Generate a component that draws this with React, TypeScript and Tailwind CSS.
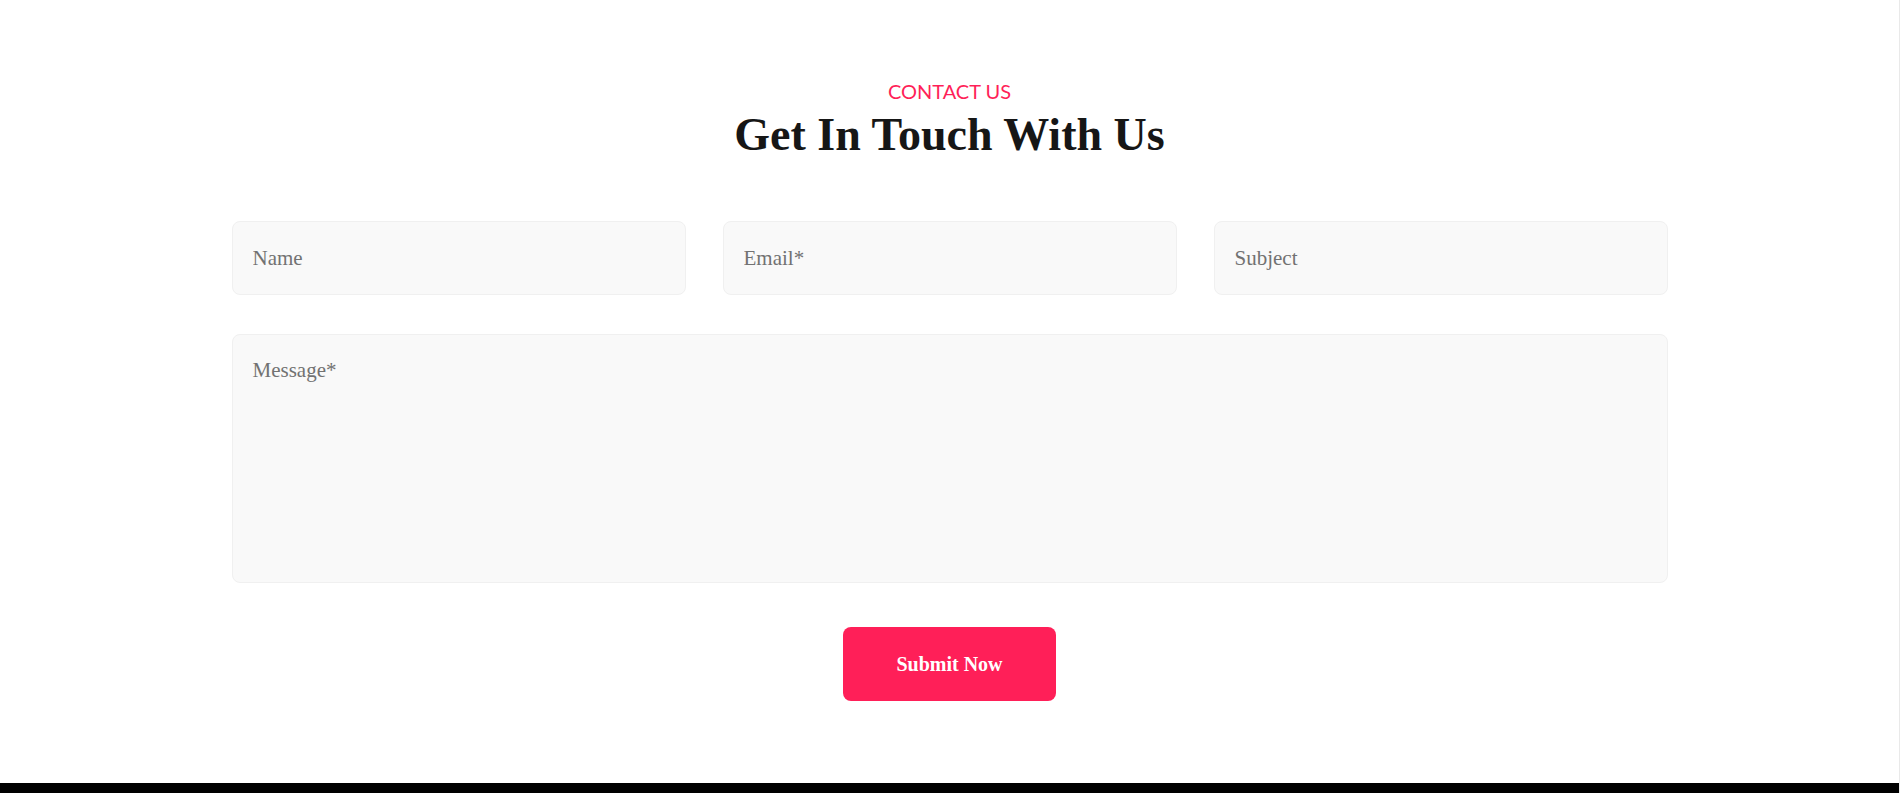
import React from "react";

export default function App() {
  const inputCls =
    "w-full h-[74px] rounded-lg border border-[#f0f0f0] bg-[#f9f9f9] pl-5 pr-5 font-['Liberation_Serif','Times_New_Roman',serif] text-[21px] text-[#333] placeholder:text-[#727272] outline-none";
  return (
    <div className="w-full min-h-[793px] bg-white border-r border-[#e9e9e9] flex flex-col">
      <section className="h-[783px] flex flex-col items-center pt-[79px]">
        <p className="font-['Lato','Liberation_Sans',sans-serif] text-[20px] leading-[24px] text-[#ff1f58] uppercase">
          Contact Us
        </p>
        <h2 className="mt-[4px] font-['Liberation_Serif','Times_New_Roman',serif] text-[46px] leading-[56px] font-bold text-[#161616]">
          Get In Touch With Us
        </h2>
        <form className="mt-[58px] w-[1436px] flex flex-col" onSubmit={(e) => e.preventDefault()}>
          <div className="grid grid-cols-3 gap-x-[37px]">
            <input className={inputCls} placeholder="Name" />
            <input className={inputCls} placeholder="Email*" />
            <input className={inputCls} placeholder="Subject" />
          </div>
          <textarea
            className="mt-[39px] w-full h-[249px] resize-none rounded-lg border border-[#f0f0f0] bg-[#f9f9f9] px-5 pt-[20px] font-['Liberation_Serif','Times_New_Roman',serif] text-[21px] leading-[30px] text-[#333] placeholder:text-[#727272] outline-none"
            placeholder="Message*"
          />
          <div className="mt-[44px] flex justify-center">
            <button
              type="submit"
              className="w-[213px] h-[74px] rounded-lg bg-[#ff1f58] font-['Liberation_Serif','Times_New_Roman',serif] text-white text-[20px] font-bold"
            >
              Submit Now
            </button>
          </div>
        </form>
      </section>
      <div className="h-[10px] bg-black" />
    </div>
  );
}
